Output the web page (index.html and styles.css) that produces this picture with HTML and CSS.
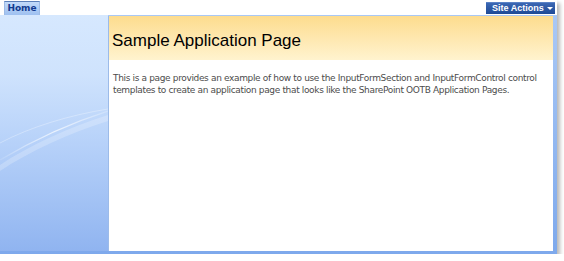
FILE: index.html
```html
<!DOCTYPE html>
<html>
<head>
<meta charset="utf-8">
<link rel="stylesheet" href="styles.css">
</head>
<body>
<div class="frame">
  <div class="topbar">
    <div class="tab">Home</div>
    <div class="site-actions">Site Actions <span class="caret"></span></div>
  </div>
  <div class="main">
    <div class="nav">
      <svg class="swoosh" width="108" height="236" viewBox="0 0 108 236">
        <defs>
          <linearGradient id="sw" x1="0" y1="0" x2="1" y2="0">
            <stop offset="0" stop-color="#ffffff" stop-opacity="0.1"/>
            <stop offset="0.5" stop-color="#ffffff" stop-opacity="0.7"/>
            <stop offset="1" stop-color="#ffffff" stop-opacity="0.2"/>
          </linearGradient>
        </defs>
        <path d="M0 150 C30 130 70 112 108 100 L108 106 C70 118 30 136 0 156 Z" fill="#ffffff" fill-opacity="0.22"/>
        <path d="M0 145 C35 124 70 108 108 96" stroke="url(#sw)" stroke-width="1.2" fill="none"/>
        <path d="M0 128 C30 112 70 100 108 94" stroke="#ffffff" stroke-opacity="0.3" stroke-width="1" fill="none"/>
      </svg>
    </div>
    <div class="content">
      <div class="titleband">
        <h1 class="title">Sample Application Page</h1>
      </div>
      <p class="desc">This is a page provides an example of how to use the InputFormSection and InputFormControl control<br>templates to create an application page that looks like the SharePoint OOTB Application Pages.</p>
    </div>
  </div>
</div>
</body>
</html>
```
FILE: styles.css
```css
html, body {
  margin: 0;
  padding: 0;
  background: #ffffff;
}
body {
  font-family: "DejaVu Sans", Verdana, sans-serif;
}
.frame {
  width: 557px;
  height: 254px;
  box-shadow: 3px 3px 4px rgba(0, 0, 0, 0.28);
  display: flex;
  flex-direction: column;
  background: #7ea6ec;
}
.topbar {
  height: 15px;
  background: #ffffff;
  display: flex;
  justify-content: space-between;
  align-items: flex-end;
  flex: none;
}
.tab {
  margin-left: 4px;
  width: 36px;
  height: 14px;
  box-sizing: border-box;
  border-top: 1px solid #5b7fb8;
  border-left: 1px solid #9dbbe6;
  border-right: 1px solid #9dbbe6;
  background: linear-gradient(#c2daf9, #9ec0f0);
  color: #123b8f;
  font: bold 9px "DejaVu Sans", sans-serif;
  text-align: center;
  line-height: 12px;
}
.site-actions {
  align-self: flex-start;
  margin-top: 2px;
  margin-right: 2px;
  width: 69px;
  height: 12px;
  box-sizing: border-box;
  padding-left: 6px;
  background: linear-gradient(#3b67b3, #1e4a96);
  border-top: 1px solid #5a82c6;
  color: #ffffff;
  font: bold 9px "Liberation Sans", Arial, sans-serif;
  line-height: 11px;
  white-space: nowrap;
  display: flex;
  align-items: center;
  gap: 3px;
}
.caret {
  width: 0;
  height: 0;
  border-left: 3px solid transparent;
  border-right: 3px solid transparent;
  border-top: 3px solid #ffffff;
}
.main {
  flex: 1;
  display: flex;
  min-height: 0;
  padding: 0 4px 3px 0;
  background: linear-gradient(#a9c8f5, #7ea9ec);
}
.nav {
  width: 108px;
  flex: none;
  background: linear-gradient(#d6e8fe 0%, #cfe3fd 25%, #b6d1f9 55%, #9dbef3 85%, #90b4f0 100%);
}
.swoosh {
  display: block;
}
.content {
  flex: 1;
  margin-top: 1px;
  background: #ffffff;
  border-left: 1px solid #9cbbe9;
}
.titleband {
  height: 44px;
  background: linear-gradient(#fddc8e, #fff3cf);
  display: flex;
  align-items: center;
  padding-left: 3px;
}
.title {
  margin: 6px 0 0 0;
  font: normal 17px "Liberation Sans", Arial, sans-serif;
  color: #000000;
}
.desc {
  margin: 12px 0 0 4px;
  font: 9px/12px "DejaVu Sans", Verdana, sans-serif;
  letter-spacing: -0.35px;
  white-space: nowrap;
  color: #4c4c4c;
}
```
